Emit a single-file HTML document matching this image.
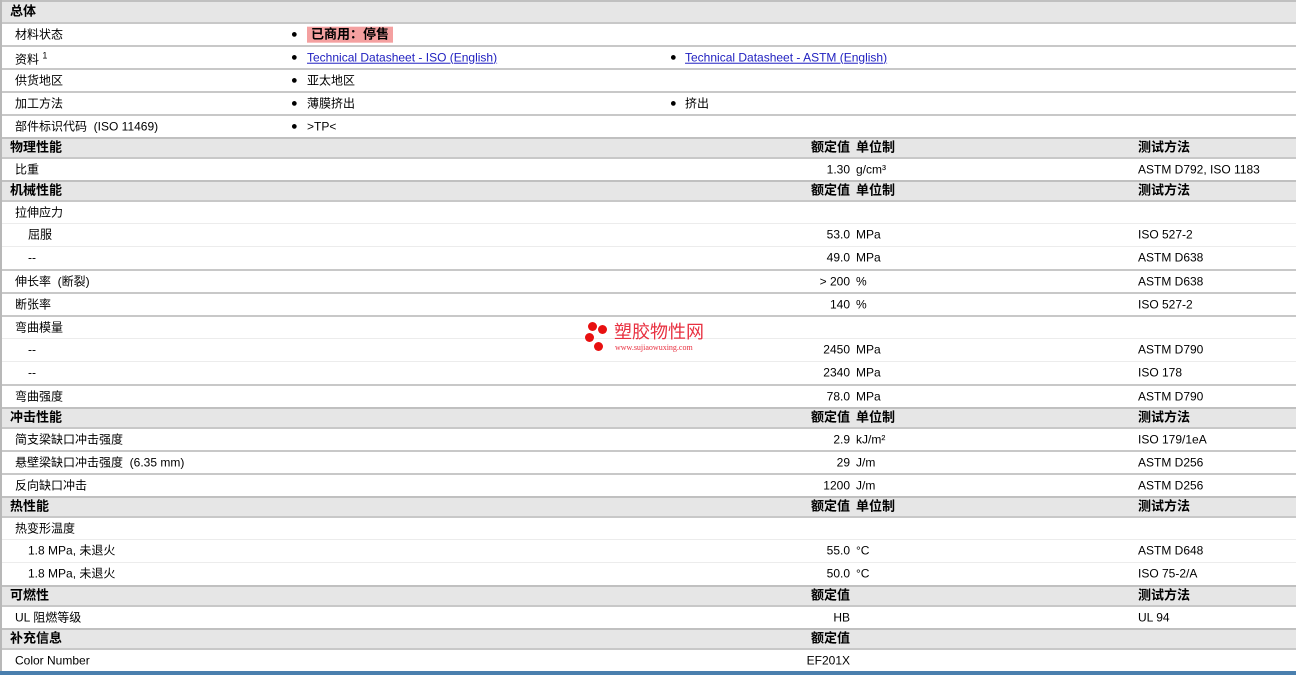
<!DOCTYPE html>
<html><head><meta charset="utf-8"><style>
*{margin:0;padding:0;box-sizing:border-box}
body{width:1296px;height:675px;overflow:hidden;background:#fff;font-family:"Liberation Sans","Noto Sans CJK SC",sans-serif;font-size:12px;color:#000}
.wrap{position:absolute;left:0;top:0;width:1296px;border-left:2px solid #b8b8b8}
.r{position:relative;height:23px;border-top:2px solid #c8c8c8;background:#fff}
.s{border-top:1px solid #ececec}
.h{position:relative;height:20px;background:#e6e6e6;border-top:2px solid #c0c0c0;font-weight:bold;font-size:13px}
.r span,.h span{position:absolute;top:50%;transform:translateY(-52%);white-space:nowrap;line-height:14px}
.l{left:13px}.l2{left:26px}
.b1{left:289px}.t1{left:305px}.b2{left:668px}.t2{left:683px}
.v{right:446px;text-align:right}
.u{left:854px}.m{left:1136px}
.dot{font-size:11px}
a{color:#2020c0;text-decoration:underline}
.tag{background:#f4a0a0;font-weight:bold;font-size:13px;padding:1px 4px}
.bar{position:absolute;left:0;top:671px;width:1296px;height:4px;background:#4a7fae}
</style></head><body>
<div class="wrap">
<div style="height:2px;background:#c0c0c0"></div>
<div class="h" style="border-top:0"><span class="l" style="left:8px">总体</span></div>
<div class="r"><span class="l">材料状态</span><span class="b1 dot">●</span><span class="t1 tag">已商用：停售</span></div>
<div class="r"><span class="l">资料 <sup style="font-size:9px">1</sup></span><span class="b1 dot">●</span><span class="t1"><a>Technical Datasheet - ISO (English)</a></span><span class="b2 dot">●</span><span class="t2"><a>Technical Datasheet - ASTM (English)</a></span></div>
<div class="r"><span class="l">供货地区</span><span class="b1 dot">●</span><span class="t1">亚太地区</span></div>
<div class="r"><span class="l">加工方法</span><span class="b1 dot">●</span><span class="t1">薄膜挤出</span><span class="b2 dot">●</span><span class="t2">挤出</span></div>
<div class="r"><span class="l">部件标识代码&nbsp; (ISO 11469)</span><span class="b1 dot">●</span><span class="t1">&gt;TP&lt;</span></div>
<div class="h"><span class="l" style="left:8px">物理性能</span><span class="v">额定值</span><span class="u">单位制</span><span class="m">测试方法</span></div>
<div class="r"><span class="l">比重</span><span class="v">1.30</span><span class="u">g/cm³</span><span class="m">ASTM D792, ISO 1183</span></div>
<div class="h"><span class="l" style="left:8px">机械性能</span><span class="v">额定值</span><span class="u">单位制</span><span class="m">测试方法</span></div>
<div class="r"><span class="l">拉伸应力</span></div>
<div class="r s"><span class="l2">屈服</span><span class="v">53.0</span><span class="u">MPa</span><span class="m">ISO 527-2</span></div>
<div class="r s"><span class="l2">--</span><span class="v">49.0</span><span class="u">MPa</span><span class="m">ASTM D638</span></div>
<div class="r"><span class="l">伸长率&nbsp; (断裂)</span><span class="v">&gt; 200</span><span class="u">%</span><span class="m">ASTM D638</span></div>
<div class="r"><span class="l">断张率</span><span class="v">140</span><span class="u">%</span><span class="m">ISO 527-2</span></div>
<div class="r"><span class="l">弯曲模量</span></div>
<div class="r s"><span class="l2">--</span><span class="v">2450</span><span class="u">MPa</span><span class="m">ASTM D790</span></div>
<div class="r s"><span class="l2">--</span><span class="v">2340</span><span class="u">MPa</span><span class="m">ISO 178</span></div>
<div class="r"><span class="l">弯曲强度</span><span class="v">78.0</span><span class="u">MPa</span><span class="m">ASTM D790</span></div>
<div class="h"><span class="l" style="left:8px">冲击性能</span><span class="v">额定值</span><span class="u">单位制</span><span class="m">测试方法</span></div>
<div class="r"><span class="l">简支梁缺口冲击强度</span><span class="v">2.9</span><span class="u">kJ/m²</span><span class="m">ISO 179/1eA</span></div>
<div class="r"><span class="l">悬壁梁缺口冲击强度&nbsp; (6.35 mm)</span><span class="v">29</span><span class="u">J/m</span><span class="m">ASTM D256</span></div>
<div class="r"><span class="l">反向缺口冲击</span><span class="v">1200</span><span class="u">J/m</span><span class="m">ASTM D256</span></div>
<div class="h"><span class="l" style="left:8px">热性能</span><span class="v">额定值</span><span class="u">单位制</span><span class="m">测试方法</span></div>
<div class="r"><span class="l">热变形温度</span></div>
<div class="r s"><span class="l2">1.8 MPa, 未退火</span><span class="v">55.0</span><span class="u">°C</span><span class="m">ASTM D648</span></div>
<div class="r s"><span class="l2">1.8 MPa, 未退火</span><span class="v">50.0</span><span class="u">°C</span><span class="m">ISO 75-2/A</span></div>
<div class="h"><span class="l" style="left:8px">可燃性</span><span class="v">额定值</span><span class="m">测试方法</span></div>
<div class="r"><span class="l">UL 阻燃等级</span><span class="v">HB</span><span class="m">UL 94</span></div>
<div class="h"><span class="l" style="left:8px">补充信息</span><span class="v">额定值</span></div>
<div class="r"><span class="l">Color Number</span><span class="v">EF201X</span></div>
</div>
<div style="position:absolute;left:585px;top:320px">
<div style="position:absolute;left:3px;top:2px;width:9px;height:9px;border-radius:50%;background:#e81010"></div>
<div style="position:absolute;left:13px;top:5px;width:9px;height:9px;border-radius:50%;background:#e81010"></div>
<div style="position:absolute;left:0;top:13px;width:9px;height:9px;border-radius:50%;background:#e81010"></div>
<div style="position:absolute;left:9px;top:22px;width:9px;height:9px;border-radius:50%;background:#e81010"></div>
<div style="position:absolute;left:29px;top:2px;font-size:18px;color:#e83040;white-space:nowrap;line-height:20px">塑胶物性网</div>
<div style="position:absolute;left:30px;top:23px;font-size:8px;color:#e83040;white-space:nowrap;font-family:'Liberation Serif',serif">www.sujiaowuxing.com</div>
</div>
<div class="bar"></div>
</body></html>
